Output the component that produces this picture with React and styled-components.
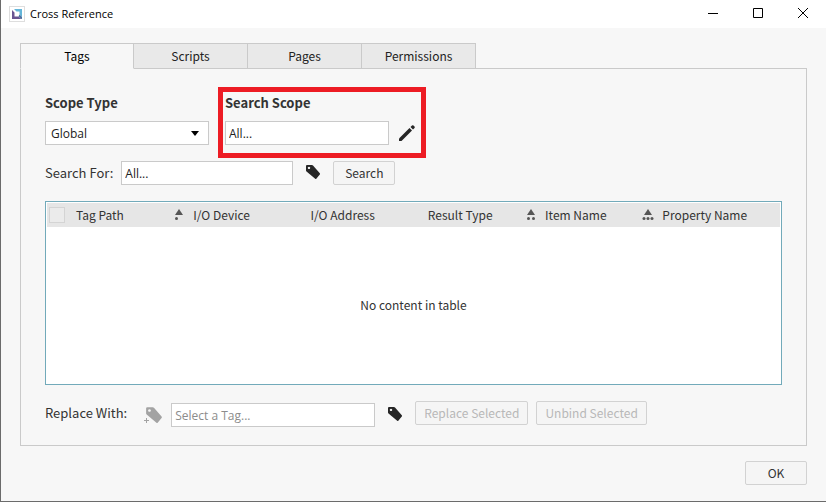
import React from 'react';
import styled, { createGlobalStyle, css } from 'styled-components';

const sourceFont = css`
    font-family: "Noto Sans CJK SC", "Noto Sans", sans-serif;
`
const systemFont = css`
    font-family: "Open Sans", "Noto Sans", sans-serif;
`

const GlobalStyle = createGlobalStyle`
    * {
        box-sizing: border-box;
    }
    body {
        margin: 0;
        background: #f7f7f7;
    }
`

const Window = styled.div`
    ${sourceFont}
    display: flex;
    flex-direction: column;
    min-height: 100vh;
    font-size: 12px;
    line-height: 20px;
    color: #333;
    background: #f7f7f7;
    border-left: 1px solid #6b6b6b;
    border-bottom: 1px solid #6b6b6b;
`

const TitleBar = styled.header`
    ${systemFont}
    display: flex;
    align-items: center;
    gap: 5px;
    height: 28px;
    padding: 0 1px 0 8px;
    color: #000;
    background: #fff;
`
const Title = styled.h1`
    flex: 1;
    margin: 0;
    font-size: 11px;
    font-weight: 400;
`
const CaptionButton = styled.button`
    display: flex;
    align-items: center;
    justify-content: center;
    width: 45px;
    height: 26px;
    padding: 0;
    border: 0;
    background: none;
`
const CaptionButtons = styled.div`
    display: flex;
    align-self: flex-start;
`

const Content = styled.main`
    flex: 1;
    padding: 15px 19px 16px;
`
const TabList = styled.div`
    display: flex;
    height: 26px;
    margin-bottom: -1px;
`
const Tab = styled.button`
    ${sourceFont}
    width: 114px;
    height: 26px;
    padding: 0;
    font-size: 12px;
    line-height: 20px;
    color: #222;
    background: #e9e9e9;
    border: 1px solid #cacaca;
    border-left-width: 0;
    ${props => props.$active && css`
        color: #000;
        background: #f7f7f7;
        border-left-width: 1px;
        border-bottom-color: #f7f7f7;
    `}
`
const Panel = styled.section`
    padding: 24px 24px 18px;
    border: 1px solid #cacaca;
`

const Row = styled.div`
    display: flex;
    align-items: flex-start;
    margin-bottom: 16px;
    &:last-child {
        margin-bottom: 0;
    }
`
const Field = styled.div`
    position: relative;
    margin-right: 16px;
`
const FieldTitle = styled.label`
    display: block;
    height: 20px;
    margin-bottom: 8px;
    font-size: 13px;
    font-weight: 700;
`
const Label = styled.label`
    margin-right: 8px;
    line-height: 24px;
    font-size: 13px;
`
const controlBox = css`
    ${systemFont}
    height: 24px;
    font-size: 12px;
    color: #222;
    background: #fff;
    border: 1px solid #cacaca;
    border-radius: 0;
`
const TextInput = styled.input`
    ${controlBox}
    width: ${props => props.$width}px;
    padding: 0 3px;
    &::placeholder {
        color: #8c8c8c;
        opacity: 1;
    }
`
const SelectWrap = styled.div`
    display: grid;
    align-items: center;
    width: 164px;
    > * {
        grid-area: 1 / 1;
    }
    > svg {
        justify-self: end;
        margin-right: 10px;
        pointer-events: none;
    }
`
const Select = styled.select`
    ${controlBox}
    appearance: none;
    width: 100%;
    padding: 0 5px;
`
const FieldControls = styled.div`
    display: flex;
`
const IconButton = styled.button`
    display: flex;
    align-items: center;
    justify-content: center;
    width: ${props => props.$width}px;
    height: 24px;
    padding: 0;
    color: #262626;
    background: none;
    border: 0;
    &:disabled {
        color: #a3a3a3;
    }
`
const Highlight = styled.div`
    position: absolute;
    inset: -6px -1px -13px -7px;
    border: 5px solid #ed1c24;
    pointer-events: none;
`

const Button = styled.button`
    ${sourceFont}
    min-width: 62px;
    height: 24px;
    padding: 0 8px;
    font-size: 12px;
    line-height: 20px;
    color: #333;
    background: #f5f5f5;
    border: 1px solid #d2d2d2;
    border-radius: 2px;
    &:disabled {
        color: #b8b8b8;
    }
`
const ButtonGroup = styled.div`
    display: flex;
    gap: 8px;
`
const ReplaceControls = styled.div`
    display: flex;
    padding-top: 2px;
`
const Footer = styled.footer`
    display: flex;
    justify-content: flex-end;
    margin-top: 15px;
`

const TableFrame = styled.div`
    padding: 1px;
    margin-bottom: 16px;
    background: #fff;
    border: 1px solid #72aaba;
`
const Table = styled.table`
    width: 100%;
    table-layout: fixed;
    border-collapse: collapse;
`
const HeadRow = styled.tr`
    height: 24px;
    background: #e6e6e6;
`
const HeadCell = styled.th`
    width: ${props => props.$width};
    padding: 0 1px 0 7px;
    font-weight: 400;
    text-align: left;
    white-space: nowrap;
`
const CheckCell = styled(HeadCell)`
    padding: 0 0 0 2px;
`
const HeadInner = styled.div`
    display: flex;
    align-items: center;
    justify-content: space-between;
`
const CheckBox = styled.input`
    appearance: none;
    display: block;
    width: 16px;
    height: 16px;
    margin: 0;
    background: #ebebeb;
    border: 1px solid #d4d4d4;
`
const EmptyCell = styled.td`
    height: 156px;
    padding: 0;
    text-align: center;
`

function LogoIcon() {
    return (
        <svg width="16" height="16" viewBox="0 0 16 16">
            <rect x="0.5" y="0.5" width="15" height="15" fill="#fff" stroke="#dedede" />
            <path d="M5 3h8v8l-2.500-2.500V5.500H7.500z" fill="#63b5d9" />
            <path d="M3 4l2.500 2.500v4h4L12.500 13H3z" fill="#6a5591" />
            <path d="M10.500 8.500L13 11v2h-.5L9.500 10.500z" fill="#49719f" />
        </svg>
    )
}

function PencilIcon() {
    return (
        <svg width="18" height="18" viewBox="0 0 18 18" fill="currentColor">
            <path d="M1 17v-2.500L11.500 4 14 6.500 3.500 17z" />
            <path d="M12.500 3l1.500-1.500q.7-.7 1.500 0l1 1q.7.8 0 1.500L15 5.500z" />
        </svg>
    )
}

function TagIcon({ plus }) {
    return (
        <svg width={plus ? 18 : 16} height="18" viewBox={plus ? '-2 0 18 18' : '0 0 16 18'} fill="currentColor">
            <path
                fillRule="evenodd"
                transform={plus ? 'translate(-1 -1) scale(1.120)' : 'translate(0 -1)'}
                d="M1 3Q1 2 2 2H7q.6 0 1 .4l6.800 7.900q.6.700 0 1.300l-3.500 4.200q-.5.500-1.100 0L1.500 8.500Q1 8 1 7.500zM4 3.700a1.200 1.200 0 1 0 .01 0z"
            />
            {plus && <path d="M-2 14h2v-2h1v2h2v1h-2v2h-1v-2h-2z" />}
        </svg>
    )
}

// triangle shows the direction, the dots show the order of the sort key
function SortIcon({ order }) {
    const dots = { 1: [3.5], 2: [3.5, 8.5], 3: [2, 6, 10] }[order]
    return (
        <svg width="12" height="12" viewBox="0 0 12 12" fill="#555">
            <path d="M6 0l4 6H2z" />
            {dots.map(x => <circle key={x} cx={x} cy="9.500" r="1.500" />)}
        </svg>
    )
}

const tabs = ['Tags', 'Scripts', 'Pages', 'Permissions']
const columns = [
    { name: 'Tag Path', order: 1 },
    { name: 'I/O Device' },
    { name: 'I/O Address' },
    { name: 'Result Type', order: 2 },
    { name: 'Item Name', order: 3 },
    { name: 'Property Name' },
]

function WindowTitle() {
    return (
        <TitleBar>
            <LogoIcon />
            <Title>Cross Reference</Title>
            <CaptionButtons>
                <CaptionButton aria-label="Minimize">
                    <svg width="10" height="10" stroke="#000"><path d="M0 5.500h10" /></svg>
                </CaptionButton>
                <CaptionButton aria-label="Maximize">
                    <svg width="10" height="10" stroke="#000" fill="none"><path d="M.5.5h9v9h-9z" /></svg>
                </CaptionButton>
                <CaptionButton aria-label="Close">
                    <svg width="10" height="10" stroke="#000"><path d="M0 0l10 10M10 0L0 10" /></svg>
                </CaptionButton>
            </CaptionButtons>
        </TitleBar>
    )
}

function ResultTable() {
    return (
        <TableFrame>
            <Table>
                <thead>
                    <HeadRow>
                        <CheckCell $width="22px">
                            <CheckBox type="checkbox" aria-label="Select all" />
                        </CheckCell>
                        {columns.map(({ name, order }, i) => (
                            <HeadCell key={name} $width={i < columns.length - 1 ? '16%' : 'auto'}>
                                <HeadInner>
                                    {name}
                                    {order && <SortIcon order={order} />}
                                </HeadInner>
                            </HeadCell>
                        ))}
                    </HeadRow>
                </thead>
                <tbody>
                    <tr>
                        <EmptyCell colSpan={columns.length + 1}>No content in table</EmptyCell>
                    </tr>
                </tbody>
            </Table>
        </TableFrame>
    )
}

export default function App() {
    return (
        <Window>
            <GlobalStyle />
            <WindowTitle />
            <Content>
                <TabList role="tablist">
                    {tabs.map((name, i) => (
                        <Tab key={name} role="tab" aria-selected={i === 0} $active={i === 0}>{name}</Tab>
                    ))}
                </TabList>
                <Panel>
                    <Row>
                        <Field>
                            <FieldTitle htmlFor="scope-type">Scope Type</FieldTitle>
                            <SelectWrap>
                                <Select id="scope-type">
                                    <option>Global</option>
                                </Select>
                                <svg width="8" height="5"><path d="M0 0h8L4 5z" /></svg>
                            </SelectWrap>
                        </Field>
                        <Field>
                            <FieldTitle htmlFor="search-scope">Search Scope</FieldTitle>
                            <FieldControls>
                                <TextInput id="search-scope" $width={164} defaultValue="All..." />
                                <IconButton $width={36} aria-label="Edit scope"><PencilIcon /></IconButton>
                            </FieldControls>
                            <Highlight />
                        </Field>
                    </Row>
                    <Row>
                        <Label htmlFor="search-for">Search For:</Label>
                        <TextInput id="search-for" $width={172} defaultValue="All..." />
                        <IconButton $width={40} aria-label="Choose a tag"><TagIcon /></IconButton>
                        <Button>Search</Button>
                    </Row>
                    <ResultTable />
                    <Row>
                        <Label htmlFor="replace-with">Replace With:</Label>
                        <ReplaceControls>
                            <IconButton $width={36} disabled aria-label="Add a tag"><TagIcon plus /></IconButton>
                            <TextInput id="replace-with" $width={204} placeholder="Select a Tag..." />
                            <IconButton $width={40} aria-label="Choose a replacement tag"><TagIcon /></IconButton>
                        </ReplaceControls>
                        <ButtonGroup>
                            <Button disabled>Replace Selected</Button>
                            <Button disabled>Unbind Selected</Button>
                        </ButtonGroup>
                    </Row>
                </Panel>
                <Footer>
                    <Button>OK</Button>
                </Footer>
            </Content>
        </Window>
    )
}
